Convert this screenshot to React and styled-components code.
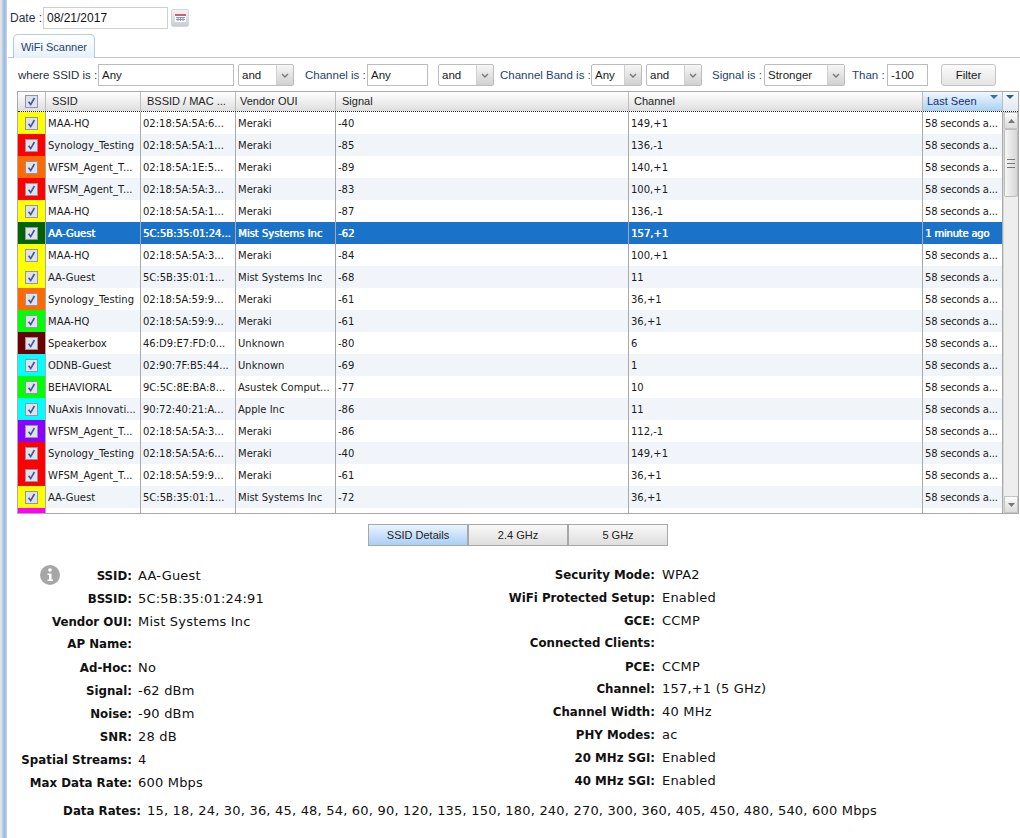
import React from "react";
import styled, { createGlobalStyle } from "styled-components";

const GlobalStyle = createGlobalStyle`
  html, body {
    margin: 0;
    padding: 0;
    background: #fff;
    overflow: hidden;
  }
  body {
    font-family: "Liberation Sans", Arial, sans-serif;
    color: #111;
  }
`;

const Page = styled.div`
  display: flex;
  width: 1020px;
  height: 838px;
  overflow: hidden;
`;

const Splitter = styled.div`
  width: 7px;
  margin-right: 1px;
  flex: none;
  background: linear-gradient(
    to right,
    #e4e6ea 0,
    #d8dce2 2px,
    #a9c4e6 3px,
    #9dbbe2 5px,
    #c9d9ee 7px
  );
`;

const Main = styled.div`
  flex: 1;
  min-width: 0;
  display: flex;
  flex-direction: column;
`;

const DateBar = styled.div`
  display: flex;
  align-items: center;
  height: 22px;
  margin-top: 7px;
  padding-left: 2px;
  font-size: 12px;
  color: #1f2f4f;
`;

const DateLabel = styled.span`
  flex: none;
  width: 33px;
`;

const DateInput = styled.div`
  box-sizing: border-box;
  width: 125px;
  height: 22px;
  padding-left: 3px;
  line-height: 21px;
  color: #111;
  border: 1px solid #d0d0d0;
`;

const CalendarButton = styled.div`
  box-sizing: border-box;
  width: 18px;
  height: 18px;
  margin-left: 3px;
  display: flex;
  align-items: center;
  justify-content: center;
  border: 1px solid #d2d5da;
  border-radius: 2px;
  background: linear-gradient(#f2f3f5, #c9cdd3);
`;

const TabStrip = styled.div`
  height: 23px;
  margin-top: 5px;
  padding-left: 5px;
  border-bottom: 1px solid #c4c4cc;
`;

const Tab = styled.div`
  box-sizing: border-box;
  width: 82px;
  height: 24px;
  text-align: center;
  line-height: 24px;
  font-size: 11px;
  color: #1f3f6f;
  border: 1px solid #b4cbe4;
  border-bottom: none;
  border-radius: 5px 5px 0 0;
  background: linear-gradient(#ffffff, #e6f0fa);
`;

const FilterBar = styled.div`
  display: flex;
  align-items: center;
  height: 22px;
  margin-top: 6px;
  padding-left: 10px;
  font-size: 11.5px;
  white-space: nowrap;
  color: #1a1a1a;
`;

const FilterLabel = styled.span`
  width: ${(props) => props.$w}px;
  flex: none;
  color: ${(props) => (props.$blue ? "#1f3f6f" : "#2a2f3a")};
`;

const FilterInput = styled.div`
  box-sizing: border-box;
  flex: none;
  width: ${(props) => props.$w}px;
  height: 22px;
  margin-right: ${(props) => props.$mr || 0}px;
  padding-left: 3px;
  line-height: 20px;
  border: 1px solid #bcbcbc;
`;

const Select = styled.div`
  box-sizing: border-box;
  flex: none;
  display: flex;
  width: ${(props) => props.$w}px;
  height: 22px;
  margin-right: ${(props) => props.$mr || 0}px;
  border: 1px solid #bcbcbc;
  border-radius: 2px;
  line-height: 20px;
`;

const SelectText = styled.span`
  flex: 1;
  padding-left: 3px;
`;

const SelectArrow = styled.span`
  width: 16px;
  display: flex;
  align-items: center;
  justify-content: center;
  border-left: 1px solid #d0d0d0;
  background: linear-gradient(#f6f6f6, #d0d0d0);
`;

const FilterButton = styled.div`
  box-sizing: border-box;
  flex: none;
  width: 55px;
  height: 22px;
  margin-left: 13px;
  text-align: center;
  line-height: 20px;
  border: 1px solid #c4c4c4;
  border-radius: 3px;
  background: linear-gradient(#fbfbfb, #e4e4e4);
`;

const GridWrap = styled.div`
  box-sizing: border-box;
  width: 1002px;
  height: 423px;
  margin: 5px 0 0 9px;
  border: 1px solid #a9a9a9;
  overflow: hidden;
  display: flex;
  flex-direction: column;
`;

const columns = "28px 95px 95px 100px 293px 294px 80px 15px";

const HeaderRow = styled.div`
  flex: none;
  display: grid;
  grid-template-columns: ${columns};
  height: 19px;
  border-bottom: 1px dotted #222;
  font-size: 11px;
  background: linear-gradient(#ffffff, #dedede);
`;

const HeaderCell = styled.div`
  box-sizing: border-box;
  display: flex;
  align-items: center;
  justify-content: ${(props) => (props.$center ? "center" : "space-between")};
  padding: 0 ${(props) => (props.$center ? 0 : 4)}px 1px ${(props) => (props.$center ? 0 : props.$pl || 5)}px;
  border-right: 1px solid ${(props) => (props.$noLine ? "transparent" : "#bdbdbd")};
  white-space: nowrap;
  color: ${(props) => (props.$sorted ? "#15306b" : "#222")};
  background: ${(props) => {
    if (props.$sorted) return "linear-gradient(#f2f8ff, #a9cff5)";
    if (props.$noLine) return "linear-gradient(#f7fafe, #dfe8f2)";
    return "none";
  }};
`;

const SortIcon = styled.svg`
  align-self: flex-start;
  margin-top: 3px;
`;

const Body = styled.div`
  flex: 1;
  min-height: 0;
  display: flex;
`;

const Rows = styled.div`
  flex: none;
  width: 985px;
  overflow: hidden;
`;

const Row = styled.div`
  display: grid;
  grid-template-columns: 28px 95px 95px 100px 293px 294px 80px;
  height: 22px;
  font-family: "DejaVu Sans", Verdana, sans-serif;
  font-size: 10px;
  color: ${(props) => (props.$selected ? "#fff" : "#1b1b1b")};
  text-shadow: ${(props) => (props.$selected ? "0.5px 0 0 #fff" : "none")};
  background: ${(props) => (props.$selected ? "#1a73c9" : props.$alt ? "#f1f5fa" : "#fff")};
`;

const ColorCell = styled.div`
  box-sizing: border-box;
  display: flex;
  align-items: center;
  justify-content: center;
  border-right: 1px solid #a9a9a9;
  background: ${(props) => props.$color};
`;

const Cell = styled.div`
  box-sizing: border-box;
  padding: 1px 3px 0 2px;
  line-height: 22px;
  white-space: nowrap;
  overflow: hidden;
  border-right: 1px solid #a9a9a9;
`;

const LastSeenCell = styled(Cell)`
  letter-spacing: -0.2px;
`;

const Scrollbar = styled.div`
  flex: none;
  width: 15px;
  display: flex;
  flex-direction: column;
  background: #eeeeee;
  border-left: 1px solid #d8d8d8;
  box-sizing: border-box;
`;

const ScrollButton = styled.div`
  flex: none;
  height: 15px;
  display: flex;
  align-items: center;
  justify-content: center;
  border: 1px solid #c4c4c4;
  background: linear-gradient(#fafafa, #dcdcdc);
`;

const ScrollThumb = styled.div`
  flex: none;
  height: 66px;
  display: flex;
  align-items: center;
  justify-content: center;
  border: 1px solid #bdbdbd;
  border-radius: 2px;
  background: linear-gradient(to right, #f6f6f6, #d6d6d6);
`;

const ScrollSpacer = styled.div`
  flex: 1;
`;

const Grip = styled.div`
  width: 8px;
  height: 7px;
  border-top: 1px solid #777;
  border-bottom: 1px solid #777;
  position: relative;
  &::after {
    content: "";
    position: absolute;
    left: 0;
    right: 0;
    top: 3px;
    border-top: 1px solid #777;
  }
`;

const Toggle = styled.div`
  display: flex;
  margin-top: 10px;
  padding-left: 360px;
`;

const ToggleButton = styled.div`
  box-sizing: border-box;
  width: 100px;
  height: 22px;
  text-align: center;
  line-height: 20px;
  font-size: 11px;
  color: #222;
  border: 1px solid #a8a8a8;
  background: ${(props) =>
    props.$active ? "linear-gradient(#eaf4fe, #a9cff5)" : "linear-gradient(#f8f8f8, #dedede)"};
`;

const Details = styled.div`
  display: grid;
  grid-template-columns: 490px 1fr;
  margin-top: 18px;
  color: #111;
  position: relative;
`;

const InfoIcon = styled.svg`
  position: absolute;
  left: 32px;
  top: 1px;
`;

const RightColumn = styled.div`
  margin-top: -1px;
`;

const DetailRow = styled.div`
  display: flex;
  align-items: baseline;
  height: 23px;
  line-height: 23px;
  white-space: nowrap;
  font-family: "DejaVu Sans", Verdana, sans-serif;
`;

const RightRow = styled(DetailRow)`
  height: 22.9px;
`;

const DetailLabel = styled.span`
  flex: none;
  width: ${(props) => props.$w}px;
  text-align: right;
  font-size: 11.8px;
  font-weight: 700;
`;

const DetailValue = styled.span`
  margin-left: ${(props) => props.$gap || 6}px;
  font-size: 13px;
  letter-spacing: 0.2px;
`;

const RatesRow = styled(DetailRow)`
  margin-top: 5px;
`;

const Check = () => (
  <svg width="13" height="13" viewBox="0 0 13 13">
    <rect x="0.5" y="0.5" width="12" height="12" fill="#dfe2ea" stroke="#9096a6" />
    <path d="M3.6 6.8 L5.7 9.6 L9.4 3" fill="none" stroke="#41549c" strokeWidth="1.6" />
  </svg>
);

const Arrow = () => (
  <svg width="8" height="5" viewBox="0 0 8 5">
    <path d="M1 1 L4 4 L7 1" fill="none" stroke="#777" strokeWidth="1.4" />
  </svg>
);

const SortMark = ({ color = "#3b6ea8" }) => (
  <SortIcon width="8" height="4" viewBox="0 0 8 4">
    <path d="M0 0 H8 L4 4 Z" fill={color} />
  </SortIcon>
);

const rows = [
  ["#ffff00", "MAA-HQ", "02:18:5A:5A:6...", "Meraki", "-40", "149,+1", "58 seconds a..."],
  ["#ff0000", "Synology_Testing", "02:18:5A:5A:1...", "Meraki", "-85", "136,-1", "58 seconds a..."],
  ["#ff6a00", "WFSM_Agent_T...", "02:18:5A:1E:5...", "Meraki", "-89", "140,+1", "58 seconds a..."],
  ["#ff0000", "WFSM_Agent_T...", "02:18:5A:5A:3...", "Meraki", "-83", "100,+1", "58 seconds a..."],
  ["#ffff00", "MAA-HQ", "02:18:5A:5A:1...", "Meraki", "-87", "136,-1", "58 seconds a..."],
  ["#006400", "AA-Guest", "5C:5B:35:01:24...", "Mist Systems Inc", "-62", "157,+1", "1 minute ago"],
  ["#ffff00", "MAA-HQ", "02:18:5A:5A:3...", "Meraki", "-84", "100,+1", "58 seconds a..."],
  ["#ffff00", "AA-Guest", "5C:5B:35:01:1...", "Mist Systems Inc", "-68", "11", "58 seconds a..."],
  ["#ff6a00", "Synology_Testing", "02:18:5A:59:9...", "Meraki", "-61", "36,+1", "58 seconds a..."],
  ["#00ff00", "MAA-HQ", "02:18:5A:59:9...", "Meraki", "-61", "36,+1", "58 seconds a..."],
  ["#6b0000", "Speakerbox", "46:D9:E7:FD:0...", "Unknown", "-80", "6", "58 seconds a..."],
  ["#00ffff", "ODNB-Guest", "02:90:7F:B5:44...", "Unknown", "-69", "1", "58 seconds a..."],
  ["#00ff00", "BEHAVIORAL", "9C:5C:8E:BA:8...", "Asustek Comput...", "-77", "10", "58 seconds a..."],
  ["#00ffff", "NuAxis Innovati...", "90:72:40:21:A...", "Apple Inc", "-86", "11", "58 seconds a..."],
  ["#8b00ff", "WFSM_Agent_T...", "02:18:5A:5A:3...", "Meraki", "-86", "112,-1", "58 seconds a..."],
  ["#ff0000", "Synology_Testing", "02:18:5A:5A:6...", "Meraki", "-40", "149,+1", "58 seconds a..."],
  ["#ff0000", "WFSM_Agent_T...", "02:18:5A:59:9...", "Meraki", "-61", "36,+1", "58 seconds a..."],
  ["#ffff00", "AA-Guest", "5C:5B:35:01:1...", "Mist Systems Inc", "-72", "36,+1", "58 seconds a..."],
  ["#ff00ff", "", "", "", "", "", ""],
];

const leftDetails = [
  ["SSID:", "AA-Guest"],
  ["BSSID:", "5C:5B:35:01:24:91"],
  ["Vendor OUI:", "Mist Systems Inc"],
  ["AP Name:", ""],
  ["Ad-Hoc:", "No"],
  ["Signal:", "-62 dBm"],
  ["Noise:", "-90 dBm"],
  ["SNR:", "28 dB"],
  ["Spatial Streams:", "4"],
  ["Max Data Rate:", "600 Mbps"],
];

const rightDetails = [
  ["Security Mode:", "WPA2"],
  ["WiFi Protected Setup:", "Enabled"],
  ["GCE:", "CCMP"],
  ["Connected Clients:", ""],
  ["PCE:", "CCMP"],
  ["Channel:", "157,+1 (5 GHz)"],
  ["Channel Width:", "40 MHz"],
  ["PHY Modes:", "ac"],
  ["20 MHz SGI:", "Enabled"],
  ["40 MHz SGI:", "Enabled"],
];

const App = () => {
  return (
    <Page>
      <GlobalStyle />
      <Splitter />
      <Main>
        <DateBar>
          <DateLabel>Date :</DateLabel>
          <DateInput>08/21/2017</DateInput>
          <CalendarButton>
            <svg width="11" height="8" viewBox="0 0 11 8">
              <rect x="0" y="0" width="11" height="8" fill="#fff" />
              <rect x="0" y="0" width="11" height="2" fill="#c8606e" />
              <path d="M1 3.5 H10 M1 5.5 H10 M3 3 V7 M5.5 3 V7 M8 3 V7" stroke="#7f95dc" />
            </svg>
          </CalendarButton>
        </DateBar>
        <TabStrip>
          <Tab>WiFi Scanner</Tab>
        </TabStrip>
        <FilterBar>
          <FilterLabel $w={80}>where SSID is :</FilterLabel>
          <FilterInput $w={136} $mr={4}>Any</FilterInput>
          <Select $w={56} $mr={11}>
            <SelectText>and</SelectText>
            <SelectArrow><Arrow /></SelectArrow>
          </Select>
          <FilterLabel $w={62} $blue>Channel is :</FilterLabel>
          <FilterInput $w={61} $mr={10}>Any</FilterInput>
          <Select $w={56} $mr={6}>
            <SelectText>and</SelectText>
            <SelectArrow><Arrow /></SelectArrow>
          </Select>
          <FilterLabel $w={91} $blue>Channel Band is :</FilterLabel>
          <Select $w={51} $mr={4}>
            <SelectText>Any</SelectText>
            <SelectArrow><Arrow /></SelectArrow>
          </Select>
          <Select $w={56} $mr={10}>
            <SelectText>and</SelectText>
            <SelectArrow><Arrow /></SelectArrow>
          </Select>
          <FilterLabel $w={52} $blue>Signal is :</FilterLabel>
          <Select $w={81} $mr={7}>
            <SelectText>Stronger</SelectText>
            <SelectArrow><Arrow /></SelectArrow>
          </Select>
          <FilterLabel $w={35} $blue>Than :</FilterLabel>
          <FilterInput $w={41}>-100</FilterInput>
          <FilterButton>Filter</FilterButton>
        </FilterBar>
        <GridWrap>
          <HeaderRow>
            <HeaderCell $center><Check /></HeaderCell>
            <HeaderCell $pl={6}>SSID</HeaderCell>
            <HeaderCell $pl={6}>BSSID / MAC ...</HeaderCell>
            <HeaderCell $pl={4}>Vendor OUI</HeaderCell>
            <HeaderCell $pl={6}>Signal</HeaderCell>
            <HeaderCell>Channel</HeaderCell>
            <HeaderCell $sorted $pl={4}>Last Seen<SortMark /></HeaderCell>
            <HeaderCell $center $noLine><SortMark color="#2d5c93" /></HeaderCell>
          </HeaderRow>
          <Body>
            <Rows>
              {rows.map((el, i) => (
                <Row key={i} $alt={i % 2 === 1} $selected={i === 5}>
                  <ColorCell $color={el[0]}><Check /></ColorCell>
                  <Cell>{el[1]}</Cell>
                  <Cell>{el[2]}</Cell>
                  <Cell>{el[3]}</Cell>
                  <Cell>{el[4]}</Cell>
                  <Cell>{el[5]}</Cell>
                  <LastSeenCell>{el[6]}</LastSeenCell>
                </Row>
              ))}
            </Rows>
            <Scrollbar>
              <ScrollButton>
                <svg width="7" height="4" viewBox="0 0 7 4"><path d="M0 4 L3.5 0 L7 4 Z" fill="#777" /></svg>
              </ScrollButton>
              <ScrollThumb><Grip /></ScrollThumb>
              <ScrollSpacer />
              <ScrollButton>
                <svg width="7" height="4" viewBox="0 0 7 4"><path d="M0 0 L3.5 4 L7 0 Z" fill="#777" /></svg>
              </ScrollButton>
            </Scrollbar>
          </Body>
        </GridWrap>
        <Toggle>
          <ToggleButton $active>SSID Details</ToggleButton>
          <ToggleButton>2.4 GHz</ToggleButton>
          <ToggleButton>5 GHz</ToggleButton>
        </Toggle>
        <Details>
          <InfoIcon width="20" height="20" viewBox="0 0 20 20">
            <circle cx="10" cy="10" r="10" fill="#a6a6a6" />
            <circle cx="10" cy="5" r="1.8" fill="#fff" />
            <path d="M7.5 8.5 H11.5 V14.5 H13 V16 H7.5 V14.5 H9 V10 H7.5 Z" fill="#fff" />
          </InfoIcon>
          <div>
            {leftDetails.map((el) => (
              <DetailRow key={el[0]}>
                <DetailLabel $w={124}>{el[0]}</DetailLabel>
                <DetailValue>{el[1]}</DetailValue>
              </DetailRow>
            ))}
          </div>
          <RightColumn>
            {rightDetails.map((el) => (
              <RightRow key={el[0]}>
                <DetailLabel $w={157}>{el[0]}</DetailLabel>
                <DetailValue $gap={7}>{el[1]}</DetailValue>
              </RightRow>
            ))}
          </RightColumn>
        </Details>
        <RatesRow>
          <DetailLabel $w={133}>Data Rates:</DetailLabel>
          <DetailValue>
            15, 18, 24, 30, 36, 45, 48, 54, 60, 90, 120, 135, 150, 180, 240, 270, 300, 360, 405, 450, 480, 540, 600 Mbps
          </DetailValue>
        </RatesRow>
      </Main>
    </Page>
  );
};

export default App;
